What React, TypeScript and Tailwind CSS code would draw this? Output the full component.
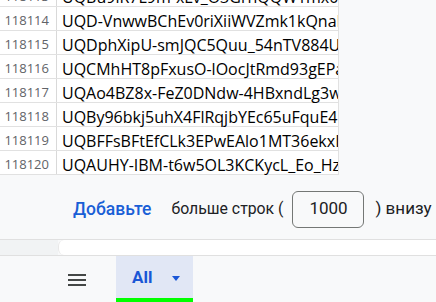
const rows = [
  ["118113", "UQBu9lR7L9m-xLv_O3GrhQQW1mx0zK"],
  ["118114", "UQD-VnwwBChEv0riXiiWVZmk1kQnaR"],
  ["118115", "UQDphXipU-smJQC5Quu_54nTV884Uq"],
  ["118116", "UQCMhHT8pFxusO-lOocJtRmd93gEPa"],
  ["118117", "UQAo4BZ8x-FeZ0DNdw-4HBxndLg3wk"],
  ["118118", "UQBy96bkj5uhX4FlRqjbYEc65uFquE4b"],
  ["118119", "UQBFFsBFtEfCLk3EPwEAlo1MT36ekxIo"],
  ["118120", "UQAUHY-IBM-t6w5OL3KCKycL_Eo_Hz1"],
];

export default function App() {
  return (
    <div className="w-[436px] h-[302px] overflow-hidden bg-[#f8f9fa] flex flex-col font-['Open_Sans',sans-serif]">
      {/* grid */}
      <div className="h-[176px] overflow-hidden">
        <div className="mt-[-17px] w-[339px] bg-white border-r border-[#e1e1e1]">
          {rows.map(([n, v]) => (
            <div key={n} className="h-[24px] flex border-b border-[#e1e1e1]">
              <div className="w-[57px] shrink-0 border-r border-[#d9d9d9] flex items-end justify-end pr-[7px] pb-[1px] text-[13px] leading-[18px] text-[#5f6368]">
                {n}
              </div>
              <div className="flex-1 overflow-hidden whitespace-nowrap flex items-end pl-[5px] mb-[-2px] text-[16px] leading-[22px] text-black">
                {v}
              </div>
            </div>
          ))}
        </div>
      </div>

      {/* add rows */}
      <div className="h-[63px] flex items-center pl-[73px] pt-[3px] text-[#202124] font-['Roboto',sans-serif]">
        <span className="text-[#1a5fd6] text-[17.5px] font-medium">Добавьте</span>
        <span className="ml-[20px] text-[15.8px]">больше строк (</span>
        <div className="ml-[9px] w-[72px] h-[37px] rounded-[6px] border border-[#747775] flex items-center justify-center text-[17px]">
          1000
        </div>
        <span className="ml-[11px] text-[17px]">) внизу</span>
      </div>

      {/* scrollbar strip */}
      <div className="h-[17px] border-y border-[#e0e0e0] flex">
        <div className="w-[58px] bg-[#f1f3f4]" />
        <div className="flex-1 bg-white rounded-l-[6px] border-l border-[#e8e8e8]" />
      </div>

      {/* sheet tabs */}
      <div className="flex-1 flex items-stretch">
        <div className="w-[116px] flex items-center pl-[68px] pt-[2px]">
          <div className="flex flex-col gap-[3px]">
            <div className="w-[18px] h-[2px] bg-[#444746]" />
            <div className="w-[18px] h-[2px] bg-[#444746]" />
            <div className="w-[18px] h-[2px] bg-[#444746]" />
          </div>
        </div>
        <div className="w-[77px] bg-[#e1e7f5] border-b-[4px] border-[#00ff00] flex items-center pl-[16px] pt-[2px] font-['Roboto',sans-serif]">
          <span className="text-[#1a56d6] text-[17px] font-bold">All</span>
          <svg className="ml-[20px]" width="8" height="5" viewBox="0 0 8 5">
            <path d="M0 0h8L4 5z" fill="#1a56d6" />
          </svg>
        </div>
      </div>
    </div>
  );
}
